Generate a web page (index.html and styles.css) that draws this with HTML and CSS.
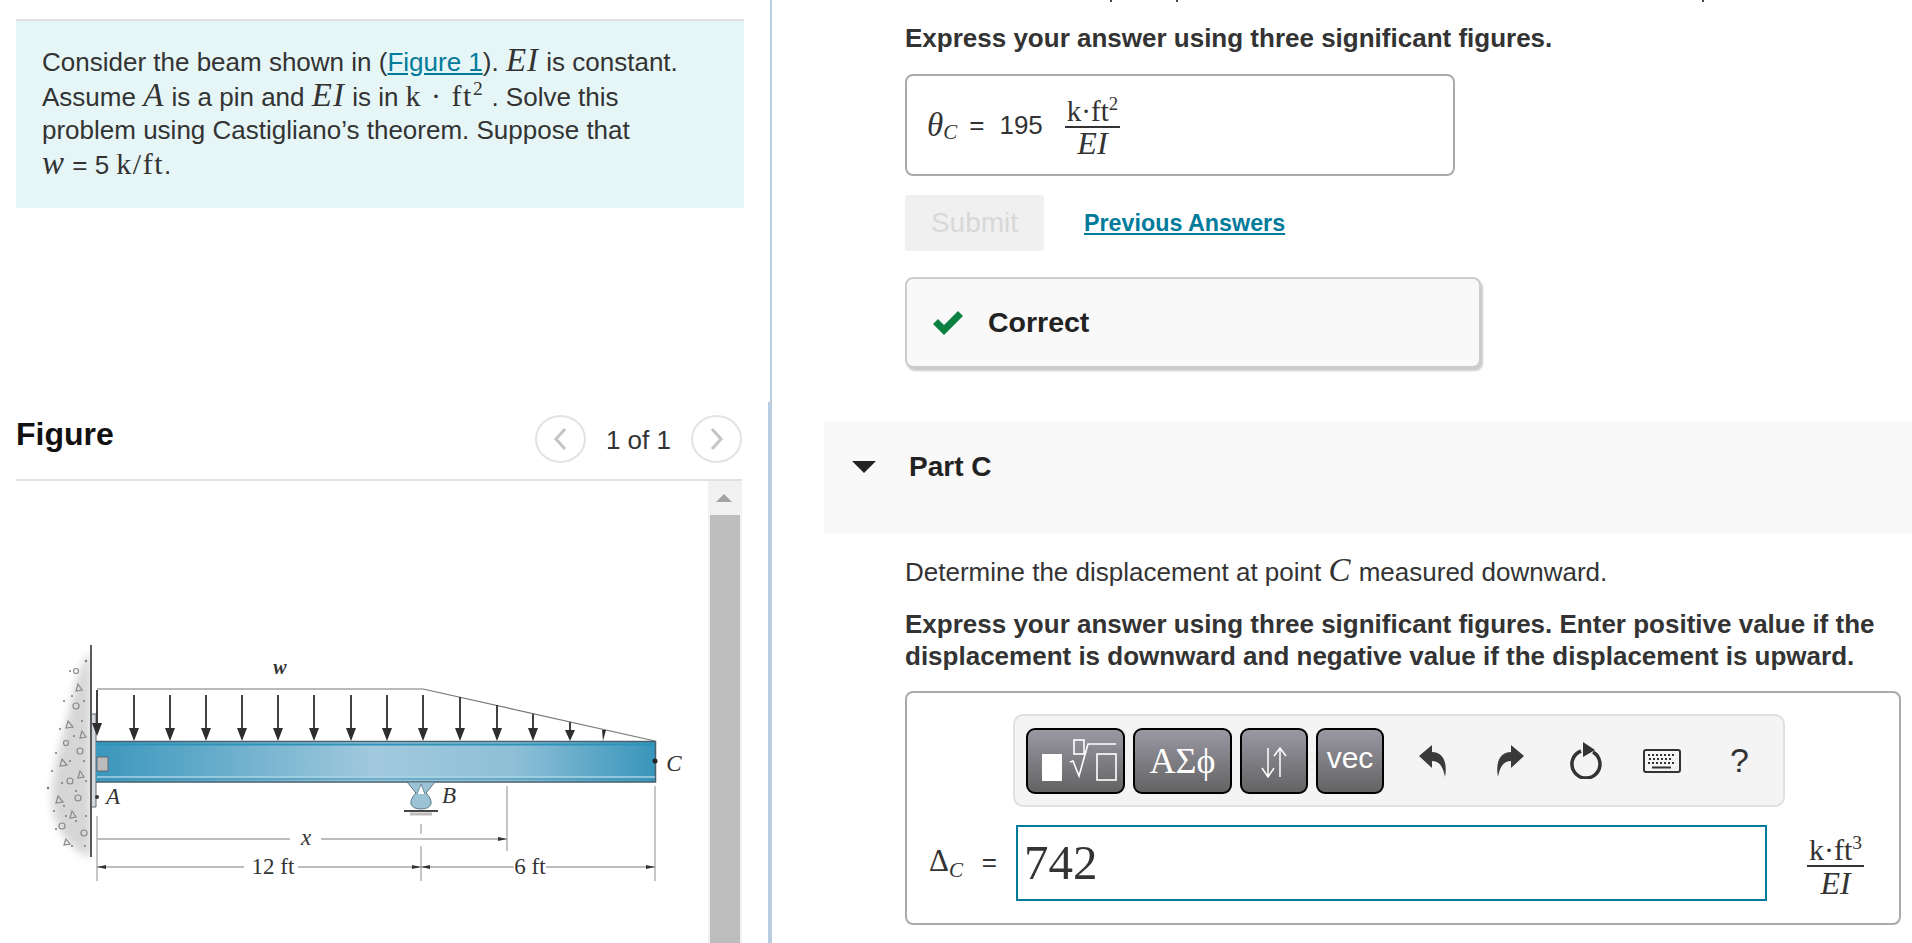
FILE: index.html
```html
<!DOCTYPE html>
<html lang="en">
<head>
<meta charset="utf-8">
<title>Beam problem</title>
<link rel="stylesheet" href="styles.css">
</head>
<body>
<main class="page">
  <section class="left">
    <div class="problem">
      <p>Consider the beam shown in (<a href="#">Figure 1</a>). <span class="m">EI</span> is constant.<br>
      Assume <span class="m">A</span> is a pin and <span class="m">EI</span> is in <span class="r">k &middot; ft<sup>2</sup></span> . Solve this<br>
      problem using Castigliano&rsquo;s theorem. Suppose that<br>
      <span class="m">w</span> = 5 <span class="r">k/ft</span>.</p>
    </div>
    <div class="fig-head">
      <h2>Figure</h2>
      <div class="pager">
        <span class="circle"><svg width="14" height="24" viewBox="0 0 14 24"><path d="M12 2 3 12l9 10" fill="none" stroke="#c4c4c4" stroke-width="3"/></svg></span>
        <span class="count">1 of 1</span>
        <span class="circle"><svg width="14" height="24" viewBox="0 0 14 24"><path d="M2 2l9 10-9 10" fill="none" stroke="#c4c4c4" stroke-width="3"/></svg></span>
      </div>
    </div>
    <div class="fig-view">
      <div class="fig-body">
        <svg class="beam" width="692" height="300" viewBox="16 640 692 300">
          <defs>
            <linearGradient id="beamg" x1="0" x2="1" y1="0" y2="0">
              <stop offset="0" stop-color="#3a97bc"/><stop offset=".5" stop-color="#a2c9de"/><stop offset=".75" stop-color="#8dbfd7"/><stop offset="1" stop-color="#3795ba"/>
            </linearGradient>
            <filter id="soft" x="-5%" y="-5%" width="110%" height="110%"><feGaussianBlur stdDeviation=".5"/></filter>
            <filter id="softer" x="-30%" y="-10%" width="160%" height="120%"><feGaussianBlur stdDeviation="4"/></filter>
            <path id="arw" d="M-.9-46H.9V-13H5L0 0-5-13H-.9Z"/>
          </defs>
          <path d="M91 650C78 665 74 690 68 715 60 745 52 770 52 800 52 825 70 850 91 856Z" fill="#d6d6d6" filter="url(#softer)"/>
          <rect x="92" y="640" width="16" height="225" fill="#fff"/>
          <g filter="url(#soft)">
            <g fill="none" stroke="#8a8a8a" stroke-width="1.200">
              <path d="M78 683l4 6-6 1zM68 720l5 6-7 1zM62 758l5 6-7 1zM82 730l4 6-6 1zM58 795l5 6-7 1zM72 810l4 6-6 1zM80 770l4 6-6 1zM66 838l4 5-6 1z"/>
              <circle cx="76" cy="705" r="3"/><circle cx="80" cy="750" r="3"/><circle cx="70" cy="780" r="3"/><circle cx="78" cy="797" r="3"/><circle cx="62" cy="825" r="3"/><circle cx="84" cy="832" r="3"/><circle cx="66" cy="742" r="2.500"/><circle cx="76" cy="670" r="2.500"/>
            </g>
            <g fill="#7a7a7a">
              <circle cx="86" cy="660" r="1.200"/><circle cx="70" cy="670" r="1"/><circle cx="64" cy="700" r="1"/><circle cx="60" cy="728" r="1"/><circle cx="56" cy="752" r="1"/><circle cx="74" cy="735" r="1"/><circle cx="52" cy="770" r="1"/><circle cx="86" cy="780" r="1"/><circle cx="62" cy="782" r="1"/><circle cx="48" cy="787" r="1.300"/><circle cx="54" cy="810" r="1"/><circle cx="64" cy="805" r="1"/><circle cx="76" cy="820" r="1"/><circle cx="86" cy="815" r="1"/><circle cx="56" cy="828" r="1"/><circle cx="72" cy="845" r="1"/><circle cx="85" cy="845" r="1"/><circle cx="84" cy="700" r="1"/><circle cx="70" cy="760" r="1"/><circle cx="84" cy="760" r="1"/><circle cx="76" cy="790" r="1"/><circle cx="66" cy="815" r="1"/><circle cx="82" cy="720" r="1"/><circle cx="72" cy="695" r="1"/>
            </g>
            <path d="M91 644V856" stroke="#333" stroke-width="1.600"/>
            <path d="M92 713H96V806H92" fill="#d4dadd" stroke="#667" stroke-width="1"/>
            <path d="M97 688H423L655 740" fill="none" stroke="#777" stroke-width="1.200"/>
            <g fill="#2e2e2e">
              <use href="#arw" x="97" y="735"/><use href="#arw" x="134" y="740"/><use href="#arw" x="170" y="740"/><use href="#arw" x="206" y="740"/><use href="#arw" x="242" y="740"/><use href="#arw" x="278" y="740"/><use href="#arw" x="314" y="740"/><use href="#arw" x="351" y="740"/><use href="#arw" x="387" y="740"/><use href="#arw" x="423" y="740"/>
              <path d="M459.100 696H460.900V727H465L460 740 455 727H459.100Z"/>
              <path d="M496.100 704H497.900V727H502L497 740 492 727H496.100Z"/>
              <path d="M532.100 713H533.900V727H538L533 740 528 727H532.100Z"/>
              <path d="M569.100 721H570.900V729H575L570 740 565 729H569.100Z"/>
              <path d="M602 729H606L603 740Z"/>
            </g>
            <rect x="96" y="740" width="560" height="41" fill="url(#beamg)"/>
            <path d="M96 740.500H655.500V781H96" fill="none" stroke="#47606d" stroke-width="1.500"/>
            <path d="M97 743.500H655" stroke="#2f93ba" stroke-width="2"/>
            <path d="M97 776H655" stroke="#a9d3e4" stroke-width="1.500"/>
            <path d="M97 778H655" stroke="#3d93b6" stroke-width="1"/>
            <rect x="97" y="756" width="11" height="14" fill="#bbb" stroke="#667"/>
            <circle cx="97" cy="796" r="2" fill="#333"/>
            <circle cx="655" cy="760" r="2.500" fill="#222"/>
            <path d="M407 781H435L426 792Q432 798 431 803 429 808 421 808 413 808 411 803 410 798 416 792Z" fill="#9cc2d6" stroke="#5b7888"/>
            <path d="M417 793 421 783 425 793" fill="#fff" stroke="#6d8896"/>
            <path d="M404 810H438" stroke="#444" stroke-width="2"/>
            <path d="M410 813H432" stroke="#bbb" stroke-width="3"/>
            <g fill="none" stroke="#a8a8a8" stroke-width="1.300">
              <path d="M97 815V880M421 823V833M421 845V880M507 785V850M655 785V880"/>
              <path d="M97 838H290M321 838H507M97 866H244M298 866H421M421 866H514M546 866H655"/>
            </g>
            <g fill="#333">
              <path d="M97 866l9-2v4zM421 866l-9-2v4zM421 866l9-2v4zM655 866l-9-2v4zM507 838l-9-2v4z"/>
            </g>
          </g>
          <g class="fig-text">
            <text x="280" y="673" text-anchor="middle" class="ital bold">w</text>
            <text x="113" y="803" text-anchor="middle" class="ital">A</text>
            <text x="449" y="802" text-anchor="middle" class="ital">B</text>
            <text x="674" y="770" text-anchor="middle" class="ital">C</text>
            <text x="306" y="844" text-anchor="middle" class="ital">x</text>
            <text x="273" y="873" text-anchor="middle">12 ft</text>
            <text x="530" y="873" text-anchor="middle">6 ft</text>
          </g>
        </svg>
      </div>
      <div class="scrollbar"><span class="scroll-up"></span><span class="scroll-thumb"></span></div>
    </div>
  </section>

  <div class="divider"></div>

  <section class="right">
    <div class="part">
      <p class="strong">Express your answer using three significant figures.</p>
      <div class="answer-static">
        <span class="m big">&theta;</span><sub class="m sub">C</sub>
        <span class="eq">=</span>
        <span class="val">195</span>
        <span class="frac"><span class="num r">k&middot;ft<sup>2</sup></span><span class="den m">EI</span></span>
      </div>
      <div class="actions">
        <span class="submit">Submit</span>
        <a class="prev" href="#">Previous Answers</a>
      </div>
      <div class="correct">
        <svg width="30" height="24" viewBox="0 0 30 24"><path d="M0 13 5 8l6 6L25 0l5 5-19 19Z" fill="#0b8040"/></svg>
        <span>Correct</span>
      </div>
    </div>

    <div class="part-head">
      <svg width="24" height="12" viewBox="0 0 24 12"><path d="M0 0H24L12 12Z" fill="#222"/></svg>
      <h3>Part C</h3>
    </div>

    <div class="part">
      <p class="plain">Determine the displacement at point <span class="m">C</span> measured downward.</p>
      <p class="strong two">Express your answer using three significant figures. Enter positive value if the displacement is downward and negative value if the displacement is upward.</p>
      <div class="answer-edit">
        <div class="toolbar">
          <button class="tb w1" type="button">
            <svg width="94" height="62" viewBox="0 0 94 62"><rect x="13" y="24" width="20" height="27" fill="#fff"/><g fill="none" stroke="#fff" stroke-width="1.600"><rect x="45" y="10" width="10" height="14"/><path d="M41 32l3-1 6 15 9-32H87"/><rect x="68" y="24" width="19" height="26"/></g></svg>
          </button>
          <button class="tb w1 sym" type="button">&Alpha;&Sigma;&#981;</button>
          <button class="tb w2" type="button">
            <svg width="64" height="62" viewBox="0 0 64 62"><g fill="none" stroke="#fff" stroke-width="1.500"><path d="M26 18V47M20 38l6 9 6-9"/><path d="M38 47V18M32 26l6-8 6 8"/></g></svg>
          </button>
          <button class="tb w2 vec" type="button">vec</button>
          <div class="tools">
            <svg class="t-undo" width="28" height="32" viewBox="0 0 28 32"><path d="M0 11 13 0V7C23 7 29 16 26 32 24 21 20 16 13 16V23Z" fill="#3a3a3a"/></svg>
            <svg class="t-redo" width="28" height="32" viewBox="0 0 28 32"><path d="M28 11 15 0V7C5 7-1 16 2 32 4 21 8 16 15 16V23Z" fill="#3a3a3a"/></svg>
            <svg class="t-reload" width="32" height="37" viewBox="0 0 32 37"><path d="M11 9A14 14 0 1 0 23 10" fill="none" stroke="#333" stroke-width="3.500"/><path d="M13 0 25 8 13 15Z" fill="#333"/></svg>
            <svg class="t-keys" width="38" height="24" viewBox="0 0 38 24"><rect x="1" y="1" width="36" height="22" rx="2" fill="none" stroke="#333" stroke-width="2"/><path d="M5 6h26M6 10h24M5 14h26" stroke="#333" stroke-width="2" stroke-dasharray="2 2"/><path d="M9 18.500H28" stroke="#333" stroke-width="2"/></svg>
            <span class="help">?</span>
          </div>
        </div>
        <div class="input-row">
          <span class="lbl"><span class="m delta">&Delta;</span><sub class="m sub">C</sub> <span class="lbl-eq">=</span></span>
          <div class="input">742</div>
          <span class="frac small"><span class="num r">k&middot;ft<sup>3</sup></span><span class="den m">EI</span></span>
        </div>
      </div>
    </div>
  </section>
</main>
</body>
</html>
```
FILE: styles.css
```css
* { box-sizing: border-box; }
html, body { margin: 0; height: 943px; overflow: hidden; background: #fff; }
body { font-family: "Liberation Sans", Arial, sans-serif; font-size: 26px; color: #333; }
p, h2, h3 { margin: 0; }
.page { display: flex; height: 943px; overflow: hidden; }

.left { width: 768px; flex: none; padding: 19px 26px 0 16px; display: flex; flex-direction: column; }
.problem { border-top: 2px solid #e0e0e0; background: #e6f6f7; height: 189px; padding: 23px 26px; margin-right: -2px; }
.problem p { line-height: 33px; }
.problem a { color: #007b9b; }
.m { font-family: "Liberation Serif", serif; font-style: italic; font-size: 33px; line-height: 1; letter-spacing: 1px; }
.r { font-family: "Liberation Serif", serif; font-size: 30px; line-height: 1; letter-spacing: 1.500px; }
sup { font-size: 65%; line-height: 0; }

.fig-head { margin-top: 198px; height: 75px; display: flex; justify-content: space-between; align-items: flex-start; border-bottom: 2px solid #e0e0e0; padding-top: 9px; }
.fig-head h2 { font-size: 32px; font-weight: bold; color: #111; line-height: 38px; }
.pager { display: flex; align-items: center; gap: 20px; }
.circle { width: 51px; height: 48px; border: 2px solid #e3e3e3; border-radius: 50%; display: flex; align-items: center; justify-content: center; }
.count { font-size: 26px; margin-top: 3px; }

.fig-view { flex: 1; display: flex; min-height: 0; }
.fig-body { flex: 1; overflow: hidden; }
.beam { display: block; margin-top: 160px; }
.fig-text text { font-family: "Liberation Serif", serif; font-size: 23px; fill: #333; }
.fig-text .ital { font-style: italic; }
.fig-text .bold { font-weight: bold; font-size: 20px; }
.scrollbar { width: 34px; display: flex; flex-direction: column; align-items: center; background: #f1f1f1; }
.scroll-up { height: 34px; width: 100%; flex: none; position: relative; }
.scroll-up::before { content: ""; position: absolute; left: 8px; top: 13px; border-left: 8px solid transparent; border-right: 8px solid transparent; border-bottom: 8px solid #a3a3a3; }
.scroll-thumb { flex: 1; width: 30px; background: #bdbdbd; }

.divider { width: 4px; flex: none; background: linear-gradient(90deg, #fff 2px, #b8cde0 2px) 0 0 / 4px 402px no-repeat, #b8cde0; }

.right { flex: 1; min-width: 0; padding: 22px 0 0 52px; background: linear-gradient(#444, #444) 338px 0 / 2px 2px no-repeat, linear-gradient(#444, #444) 404px 0 / 2px 2px no-repeat, linear-gradient(#444, #444) 930px 0 / 2px 2px no-repeat; }
.part { padding: 0 11px 0 81px; }
.strong { font-weight: bold; line-height: 32px; }
.plain { line-height: 32px; margin-top: 20px; }
.two { margin-top: 20px; }
.answer-static { margin-top: 20px; width: 550px; height: 102px; border: 2px solid #aaa; border-radius: 8px; display: flex; align-items: center; padding-left: 20px; }
.big { font-size: 33px; letter-spacing: 0; }
.sub { font-size: 21px; margin-top: 14px; letter-spacing: 0; }
.eq { margin: 0 15px 0 12px; }
.val { margin-right: 22px; }
.frac { display: inline-flex; flex-direction: column; align-items: center; }
.num { border-bottom: 2px solid #333; padding: 4px 2px 0; line-height: 30px; font-size: 29px; letter-spacing: 0; }
.den { font-size: 32px; line-height: 30px; letter-spacing: 0; }
.actions { margin-top: 19px; display: flex; align-items: center; gap: 40px; }
.submit { width: 139px; height: 56px; background: #f0f0f0; border-radius: 3px; color: #d8d8d8; font-size: 28px; display: flex; align-items: center; justify-content: center; }
.prev { color: #007b9b; font-weight: bold; font-size: 23.300px; }
.correct { margin-top: 26px; width: 576px; height: 91px; background: #f9f9f9; border: 2px solid #ccc; border-radius: 8px; box-shadow: 2px 3px 2px #ccc; display: flex; align-items: center; gap: 25px; padding-left: 26px; }
.correct span { font-weight: bold; font-size: 28.500px; color: #222; }

.part-head { margin-top: 53px; height: 113px; background: #f9f9f9; display: flex; align-items: flex-start; padding-left: 28px; gap: 33px; }
.part-head svg { margin-top: 40px; }
.part-head h3 { font-size: 28px; line-height: 32px; color: #222; margin-top: 30px; }

.answer-edit { margin-top: 19px; height: 234px; border: 2px solid #aaa; border-radius: 8px; padding: 21px 8px 0 22px; }
.toolbar { margin-left: 84px; width: 772px; height: 93px; background: #f4f4f4; border: 2px solid #e0e0e0; border-radius: 10px; display: flex; align-items: center; padding-left: 11px; gap: 8px; }
.tb { height: 66px; border: 2px solid #000; border-radius: 9px; background: linear-gradient(#9a98a3, #636363); color: #fff; padding: 0; display: flex; align-items: center; justify-content: center; flex: none; }
.w1 { width: 99px; }
.w2 { width: 68px; }
.sym { font-family: "Liberation Serif", serif; font-size: 36px; }
.vec { font-family: "Liberation Sans", sans-serif; font-size: 30px; padding-bottom: 6px; }
.tools { display: flex; align-items: center; margin-left: 27px; }
.t-redo { margin-left: 49px; }
.t-reload { margin-left: 46px; }
.t-keys { margin-left: 41px; }
.help { margin-left: 49px; font-size: 34px; color: #333; }
.input-row { display: flex; align-items: center; margin-top: 18px; }
.lbl { width: 87px; flex: none; white-space: nowrap; font-size: 24px; }
.lbl-eq { margin-left: 12px; font-size: 26px; }
.delta { font-style: normal; font-size: 31px; letter-spacing: 0; }
.input { flex: none; width: 751px; height: 76px; border: 2px solid #007b9b; font-family: "Liberation Serif", serif; font-size: 49px; line-height: 72px; padding-left: 6px; }
.small { margin-left: 40px; }
.small .num { font-size: 30px; line-height: 30px; padding-top: 8px; }
.small .den { font-size: 32px; line-height: 32px; }
```
